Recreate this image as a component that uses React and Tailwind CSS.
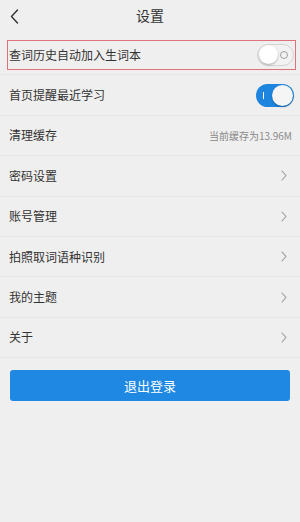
import React from "react";

const font = { fontFamily: '"Noto Sans CJK SC", "Noto Sans", sans-serif' };

const Chevron = () => (
  <svg width="6" height="11" viewBox="0 0 6 11" fill="none">
    <path d="M1 1l4 4.5-4 4.5" stroke="#9a9a9a" strokeWidth="1.1" strokeLinecap="round" strokeLinejoin="round" />
  </svg>
);

const SwitchOff = () => (
  <div className="w-[37px] h-[22px] rounded-full bg-[#f2f2f2] border border-[#d4d4d4] flex items-center justify-between pl-px pr-[5px]">
    <div className="w-[19px] h-[19px] rounded-full bg-white shadow-[0_1px_2px_rgba(0,0,0,0.3)]" />
    <div className="w-[8px] h-[8px] rounded-full border border-[#a0a0a0]" />
  </div>
);

const SwitchOn = () => (
  <div className="w-[38px] h-[23px] rounded-full bg-[#1e85de] flex items-center justify-between pl-[7px] pr-px">
    <div className="w-px h-[7px] bg-white" />
    <div className="w-[21px] h-[21px] rounded-full bg-[#f5f5f5] shadow-[0_1px_2px_rgba(0,0,0,0.3)]" />
  </div>
);

const rows = [
  { label: "查词历史自动加入生词本", right: "off", marked: true },
  { label: "首页提醒最近学习", right: "on" },
  { label: "清理缓存", right: "text", value: "当前缓存为13.96M" },
  { label: "密码设置", right: "chev" },
  { label: "账号管理", right: "chev" },
  { label: "拍照取词语种识别", right: "chev" },
  { label: "我的主题", right: "chev" },
  { label: "关于", right: "chev" },
];

export default function App() {
  return (
    <div className="w-[300px] h-[522px] bg-[#f0efef] flex flex-col" style={font}>
      <div className="h-[35px] flex items-center justify-center relative">
        <svg className="absolute left-[10px] top-[9px]" width="9" height="15" viewBox="0 0 9 15" fill="none">
          <path d="M7.5 1L1.5 7.5 7.5 14" stroke="#333" strokeWidth="1.4" strokeLinecap="round" strokeLinejoin="round" />
        </svg>
        <span className="text-[14px] text-[#333] -mt-[4px]">设置</span>
      </div>
      <div className="flex flex-col">
        {rows.map((r) => (
          <div
            key={r.label}
            className="relative h-[40.4px] flex items-center justify-between pl-[9px] pr-[6px] border-b border-[#e8e7e7]"
          >
            <span className="text-[12px] text-[#333]">{r.label}</span>
            {r.right === "off" && <SwitchOff />}
            {r.right === "on" && <SwitchOn />}
            {r.right === "text" && (
              <span className="text-[10px] text-[#8a8a8a] pr-[2px]">{r.value}</span>
            )}
            {r.right === "chev" && (
              <span className="pr-[7px]">
                <Chevron />
              </span>
            )}
            {r.marked && (
              <div className="absolute left-[7px] right-[4px] top-[5px] h-[30px] border border-[#e0707c]" />
            )}
          </div>
        ))}
      </div>
      <div className="px-[10px] mt-[12px]">
        <button className="w-full h-[31px] rounded-[3px] bg-[#1e88e3] text-white text-[13px] flex items-center justify-center">
          退出登录
        </button>
      </div>
    </div>
  );
}
